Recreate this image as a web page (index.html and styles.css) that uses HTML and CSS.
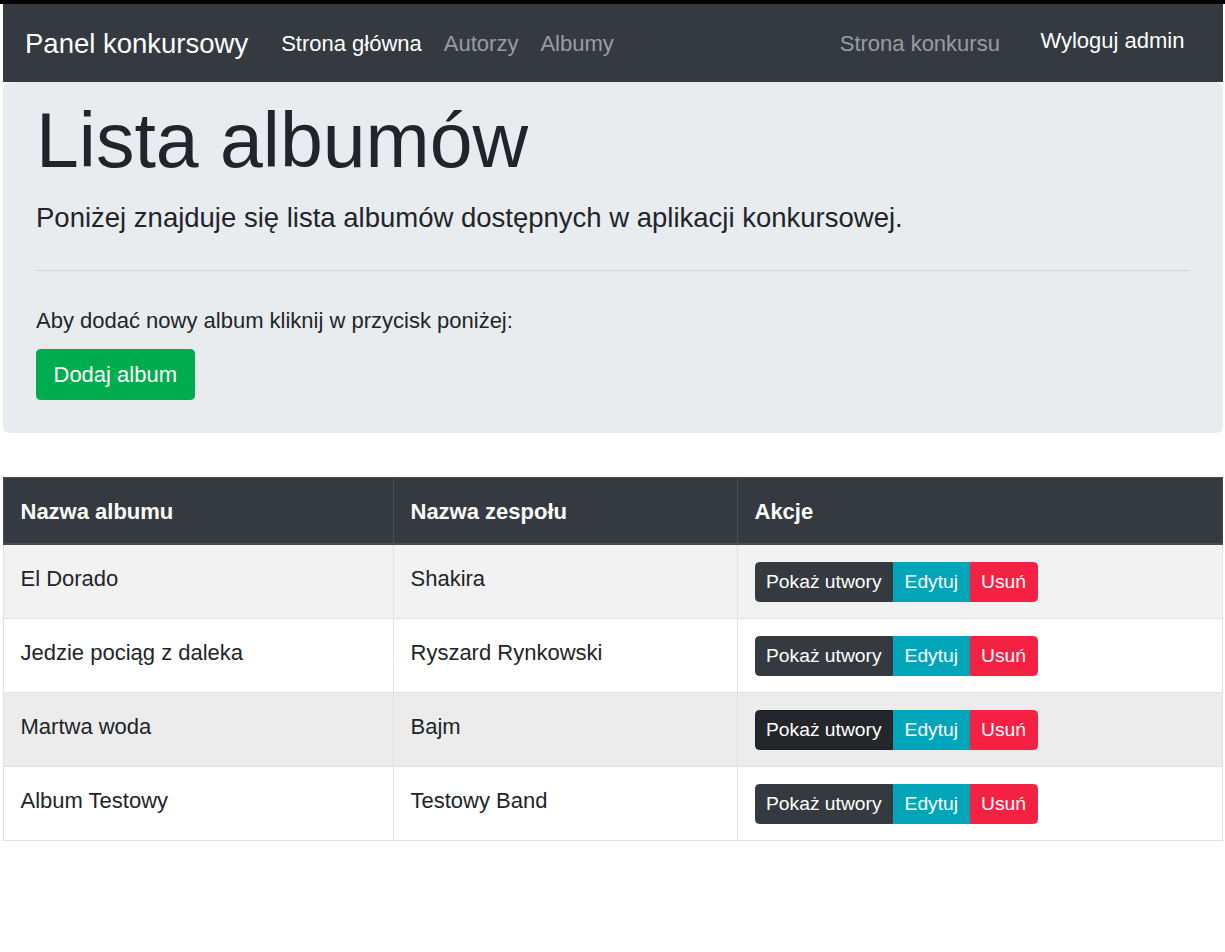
FILE: index.html
```html
<!DOCTYPE html>
<html lang="pl">
<head>
<meta charset="utf-8">
<title>Lista albumów</title>
<link rel="stylesheet" href="styles.css">
</head>
<body>
<div class="topstrip"></div>
<div class="page">
  <nav class="navbar">
    <a class="brand" href="#">Panel konkursowy</a>
    <ul class="nav">
      <li><a class="nav-link active" href="#">Strona główna</a></li>
      <li><a class="nav-link" href="#">Autorzy</a></li>
      <li><a class="nav-link" href="#">Albumy</a></li>
    </ul>
    <div class="nav-right">
      <a class="nav-link contest" href="#">Strona konkursu</a>
      <a class="logout" href="#">Wyloguj admin</a>
    </div>
  </nav>

  <section class="jumbotron">
    <h1 class="display">Lista albumów</h1>
    <p class="lead">Poniżej znajduje się lista albumów dostępnych w aplikacji konkursowej.</p>
    <hr class="divider">
    <p class="hint">Aby dodać nowy album kliknij w przycisk poniżej:</p>
    <a class="btn btn-success" href="#">Dodaj album</a>
  </section>

  <table class="table">
    <colgroup>
      <col class="col-album">
      <col class="col-band">
      <col class="col-actions">
    </colgroup>
    <thead>
      <tr>
        <th>Nazwa albumu</th>
        <th>Nazwa zespołu</th>
        <th>Akcje</th>
      </tr>
    </thead>
    <tbody>
      <tr class="odd">
        <td>El Dorado</td>
        <td>Shakira</td>
        <td><div class="btn-group"><a class="btn-sm btn-dark" href="#">Pokaż utwory</a><a class="btn-sm btn-info" href="#">Edytuj</a><a class="btn-sm btn-danger" href="#">Usuń</a></div></td>
      </tr>
      <tr>
        <td>Jedzie pociąg z daleka</td>
        <td>Ryszard Rynkowski</td>
        <td><div class="btn-group"><a class="btn-sm btn-dark" href="#">Pokaż utwory</a><a class="btn-sm btn-info" href="#">Edytuj</a><a class="btn-sm btn-danger" href="#">Usuń</a></div></td>
      </tr>
      <tr class="hover">
        <td>Martwa woda</td>
        <td>Bajm</td>
        <td><div class="btn-group"><a class="btn-sm btn-dark btn-dark-hover" href="#">Pokaż utwory</a><a class="btn-sm btn-info" href="#">Edytuj</a><a class="btn-sm btn-danger" href="#">Usuń</a></div></td>
      </tr>
      <tr>
        <td>Album Testowy</td>
        <td>Testowy Band</td>
        <td><div class="btn-group"><a class="btn-sm btn-dark" href="#">Pokaż utwory</a><a class="btn-sm btn-info" href="#">Edytuj</a><a class="btn-sm btn-danger" href="#">Usuń</a></div></td>
      </tr>
    </tbody>
  </table>
</div>
</body>
</html>
```

FILE: styles.css
```css
* { box-sizing: border-box; }

html, body {
  margin: 0;
  padding: 0;
  background: #fff;
}

body {
  font-family: "Liberation Sans", Arial, "Helvetica Neue", sans-serif;
  font-size: 22px;
  line-height: 1.5;
  color: #212529;
}

a { text-decoration: none; }

.topstrip {
  height: 4px;
  background: #000;
}

.page {
  padding: 0 2px 0 3px;
}

/* Navbar */
.navbar {
  display: flex;
  align-items: center;
  height: 78px;
  padding: 0 22px;
  background: #343a40;
}

.brand {
  font-size: 27.5px;
  line-height: 1.5;
  padding: 6.9px 0 5px;
  margin-right: 22px;
  color: #fff;
  white-space: nowrap;
}

.nav {
  display: flex;
  list-style: none;
  margin: 0;
  padding: 0;
}

.nav-link {
  display: block;
  padding: 11px 11px 11px;
  line-height: 33px;
  color: rgba(255, 255, 255, 0.5);
  white-space: nowrap;
}

.nav-link.active { color: #fff; }

.nav-right {
  display: flex;
  align-items: center;
  margin-left: auto;
}

.nav-link.contest {
  margin-right: 1px;
}

.logout {
  display: block;
  margin-left: 11px;
  padding: 6px 16.5px 12px 17.5px;
  line-height: 33px;
  color: #fff;
  white-space: nowrap;
}

/* Jumbotron */
.jumbotron {
  background: #e9ecef;
  border-radius: 6.6px;
  padding: 12px 33px 33px;
  margin-bottom: 44px;
}

.display {
  font-size: 77px;
  font-weight: 300;
  line-height: 1.2;
  margin: 0 0 11px;
}

.lead {
  font-size: 27.5px;
  line-height: 1.5;
  margin: 0;
}

.divider {
  border: 0;
  border-top: 1px solid rgba(0, 0, 0, 0.1);
  margin: 31px 0 33px;
  height: 0;
}

.hint {
  margin: 0 0 12px;
  line-height: 33px;
}

.btn {
  display: inline-block;
  padding: 8.25px 16.5px;
  line-height: 33px;
  border: 1px solid transparent;
  border-radius: 4.4px;
  font-size: 22px;
}

.btn-success {
  background: #00ad4e;
  border-color: #00ad4e;
  color: #fff;
}

/* Table */
.table {
  width: 100%;
  border-collapse: collapse;
  table-layout: fixed;
  border: 1px solid #dee2e6;
}

.col-album { width: 390px; }
.col-band { width: 344px; }

.table th,
.table td {
  padding: 16.5px;
  line-height: 33px;
  text-align: left;
  vertical-align: top;
  border: 1px solid #dee2e6;
}

.table thead th {
  background: #343a40;
  color: #fff;
  font-weight: bold;
  border-color: #454d55;
  border-bottom-width: 2px;
  padding: 16.5px 16.5px 15.5px;
}

.table tbody tr.odd { background: #f2f2f2; }
.table tbody tr.hover { background: #ececec; }

.btn-group {
  display: inline-flex;
  vertical-align: top;
}

.btn-sm {
  display: block;
  padding: 5.5px 10.5px;
  font-size: 19.25px;
  line-height: 27px;
  border: 1px solid transparent;
  color: #fff;
  white-space: nowrap;
}

.btn-group .btn-sm:first-child {
  border-radius: 4.4px 0 0 4.4px;
}

.btn-group .btn-sm:last-child {
  border-radius: 0 4.4px 4.4px 0;
}

.btn-dark {
  background: #343a40;
  border-color: #343a40;
}

.btn-dark-hover {
  background: #23272b;
  border-color: #1d2124;
}

.btn-info {
  background: #00a5b9;
  border-color: #00a5b9;
}

.btn-danger {
  background: #f52142;
  border-color: #f52142;
}
```
